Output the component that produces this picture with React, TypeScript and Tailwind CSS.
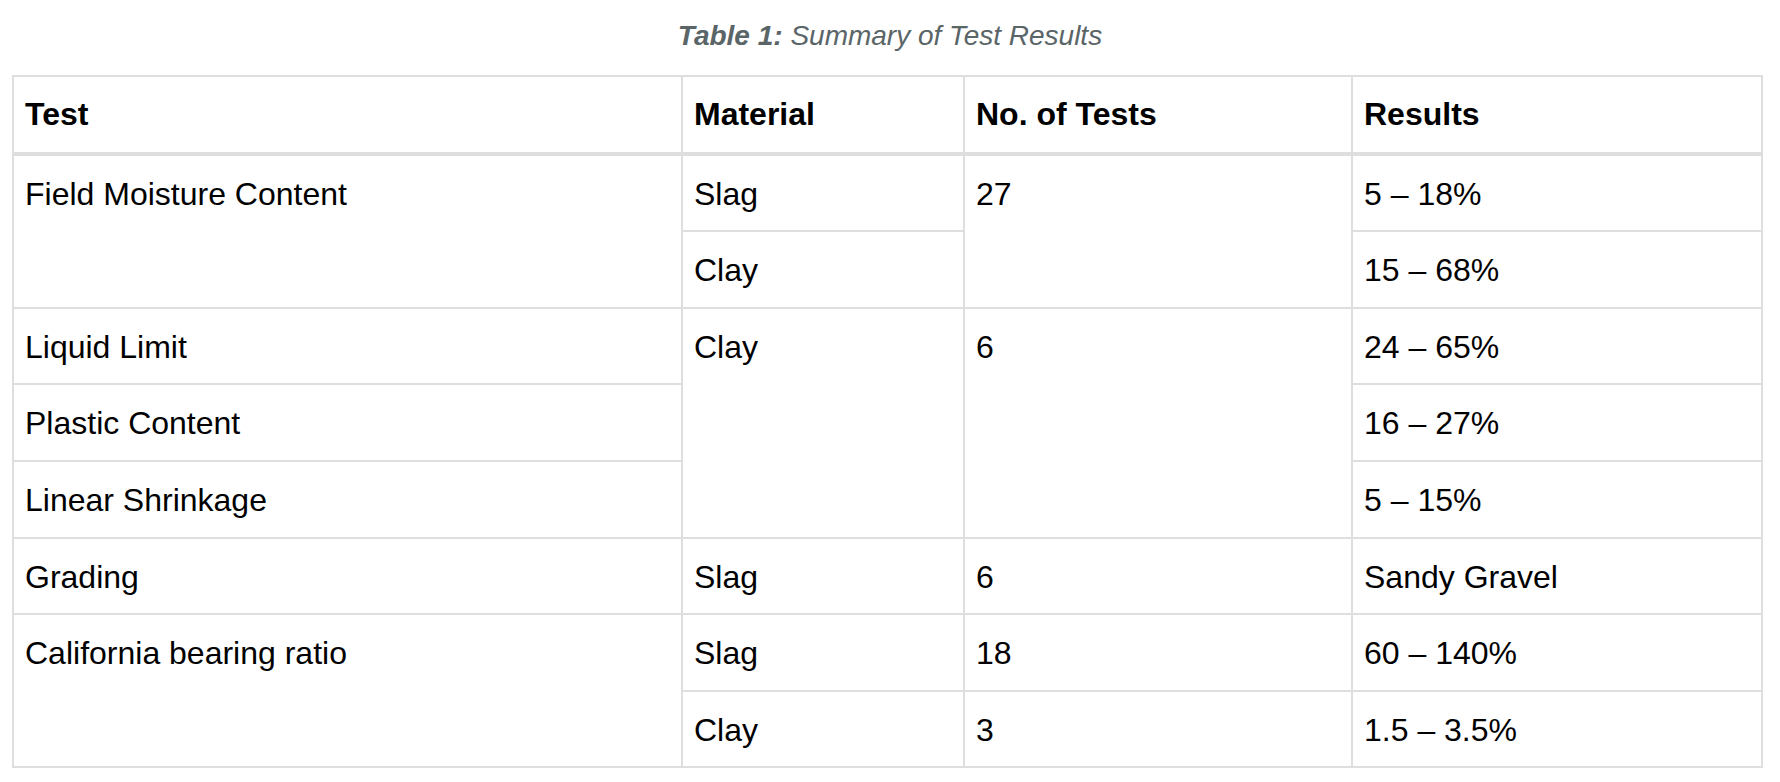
import React from "react";

type Cell = { text: string; rowSpan?: number };

// rows of the table body; cells covered by a rowSpan above are left out
const rows: Cell[][] = [
  [{ text: "Field Moisture Content", rowSpan: 2 }, { text: "Slag" }, { text: "27", rowSpan: 2 }, { text: "5 – 18%" }],
  [{ text: "Clay" }, { text: "15 – 68%" }],
  [{ text: "Liquid Limit" }, { text: "Clay", rowSpan: 3 }, { text: "6", rowSpan: 3 }, { text: "24 – 65%" }],
  [{ text: "Plastic Content" }, { text: "16 – 27%" }],
  [{ text: "Linear Shrinkage" }, { text: "5 – 15%" }],
  [{ text: "Grading" }, { text: "Slag" }, { text: "6" }, { text: "Sandy Gravel" }],
  [{ text: "California bearing ratio", rowSpan: 2 }, { text: "Slag" }, { text: "18" }, { text: "60 – 140%" }],
  [{ text: "Clay" }, { text: "3" }, { text: "1.5 – 3.5%" }],
];

const headers = ["Test", "Material", "No. of Tests", "Results"];

export default function App() {
  return (
    <div className="min-h-screen bg-white pt-[16px] font-['Liberation_Sans',Arial,sans-serif] text-black">
      <p className="mb-[19px] text-center text-[28px] leading-[40px] italic text-[#5a6567]">
        <span className="font-bold">Table 1:</span> Summary of Test Results
      </p>
      <table className="ml-[12px] w-[1751px] table-fixed border-collapse border-2 border-[#dedede] text-[32px] leading-[42.6px]">
        <colgroup>
          <col className="w-[669px]" />
          <col className="w-[282px]" />
          <col className="w-[388px]" />
          <col />
        </colgroup>
        <thead>
          <tr>
            {headers.map((h) => (
              <th
                key={h}
                className="border-2 border-b-4 border-[#dedede] px-[11px] py-[16px] text-left align-top font-bold"
              >
                {h}
              </th>
            ))}
          </tr>
        </thead>
        <tbody>
          {rows.map((row, i) => (
            <tr key={i}>
              {row.map((c, j) => (
                <td
                  key={j}
                  rowSpan={c.rowSpan}
                  className="border-2 border-[#dedede] px-[11px] pt-[17px] pb-[15px] align-top"
                >
                  {c.text}
                </td>
              ))}
            </tr>
          ))}
        </tbody>
      </table>
    </div>
  );
}
